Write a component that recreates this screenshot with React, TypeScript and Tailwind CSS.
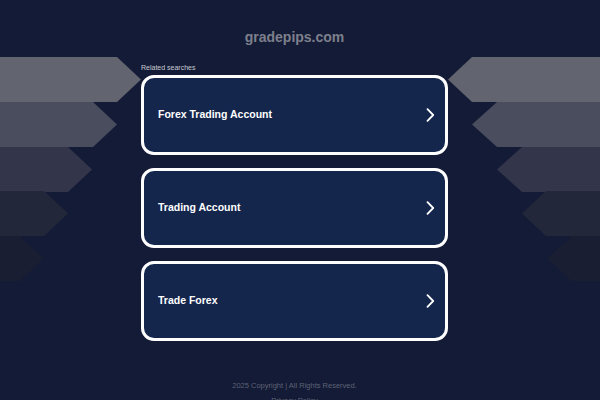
import React from "react";

const items = ["Forex Trading Account", "Trading Account", "Trade Forex"];

const leftArrows = [
  { y: 57, flat: 117, tip: 141, c: "#62646f" },
  { y: 102, flat: 93, tip: 117, c: "#4a4d5e" },
  { y: 147, flat: 68, tip: 92, c: "#33364a" },
  { y: 191, flat: 44, tip: 68, c: "#22273a" },
  { y: 236, flat: 20, tip: 43, c: "#191e33" },
];
const rightArrows = [
  { y: 57, flat: 472, tip: 448, c: "#62646f" },
  { y: 102, flat: 497, tip: 472, c: "#4a4d5e" },
  { y: 147, flat: 522, tip: 497, c: "#33364a" },
  { y: 191, flat: 546, tip: 522, c: "#22273a" },
  { y: 236, flat: 572, tip: 547, c: "#191e33" },
];

function Chevron() {
  return (
    <svg width="10" height="14" viewBox="0 0 10 14" fill="none">
      <path d="M2.5 1.2 L8.2 7 L2.5 12.8" stroke="white" strokeWidth="1.8" strokeLinecap="round" strokeLinejoin="round" />
    </svg>
  );
}

export default function App() {
  const h = 45;
  return (
    <div
      className="relative w-[600px] h-[400px] overflow-hidden bg-[#141b36]"
      style={{ fontFamily: '"Liberation Sans", Arial, sans-serif' }}
    >
      <svg className="absolute inset-0" width="600" height="400" viewBox="0 0 600 400">
        {leftArrows.map((a, i) => (
          <polygon
            key={"l" + i}
            points={`0,${a.y} ${a.flat},${a.y} ${a.tip},${a.y + h / 2} ${a.flat},${a.y + h} 0,${a.y + h}`}
            fill={a.c}
          />
        ))}
        {rightArrows.map((a, i) => (
          <polygon
            key={"r" + i}
            points={`600,${a.y} ${a.flat},${a.y} ${a.tip},${a.y + h / 2} ${a.flat},${a.y + h} 600,${a.y + h}`}
            fill={a.c}
          />
        ))}
      </svg>
      <div className="relative flex flex-col">
        <div className="pt-[28px] text-center text-[14px] leading-[18px] font-bold text-[#7d808c] w-[589px]">
          gradepips.com
        </div>
        <div className="ml-[141px] mt-[18px] text-[7px] leading-[8px] text-[#c8cad2]">Related searches</div>
        <div className="ml-[141px] mt-[3px] flex w-[307px] flex-col gap-[13px]">
          {items.map((t) => (
            <div
              key={t}
              className="flex h-[80px] items-center justify-between rounded-[13px] border-[3px] border-white bg-[#15264d] pl-[14px] pr-[10px]"
            >
              <span className="text-[10.5px] font-bold text-white">{t}</span>
              <Chevron />
            </div>
          ))}
        </div>
        <div className="mt-[40px] w-[589px] text-center text-[7.5px] leading-[9px] text-[#5d6275]">
          2025 Copyright | All Rights Reserved.
        </div>
        <div className="mt-[6px] w-[589px] text-center text-[7.5px] leading-[9px] text-[#5d6275]">
          Privacy Policy
        </div>
      </div>
    </div>
  );
}
